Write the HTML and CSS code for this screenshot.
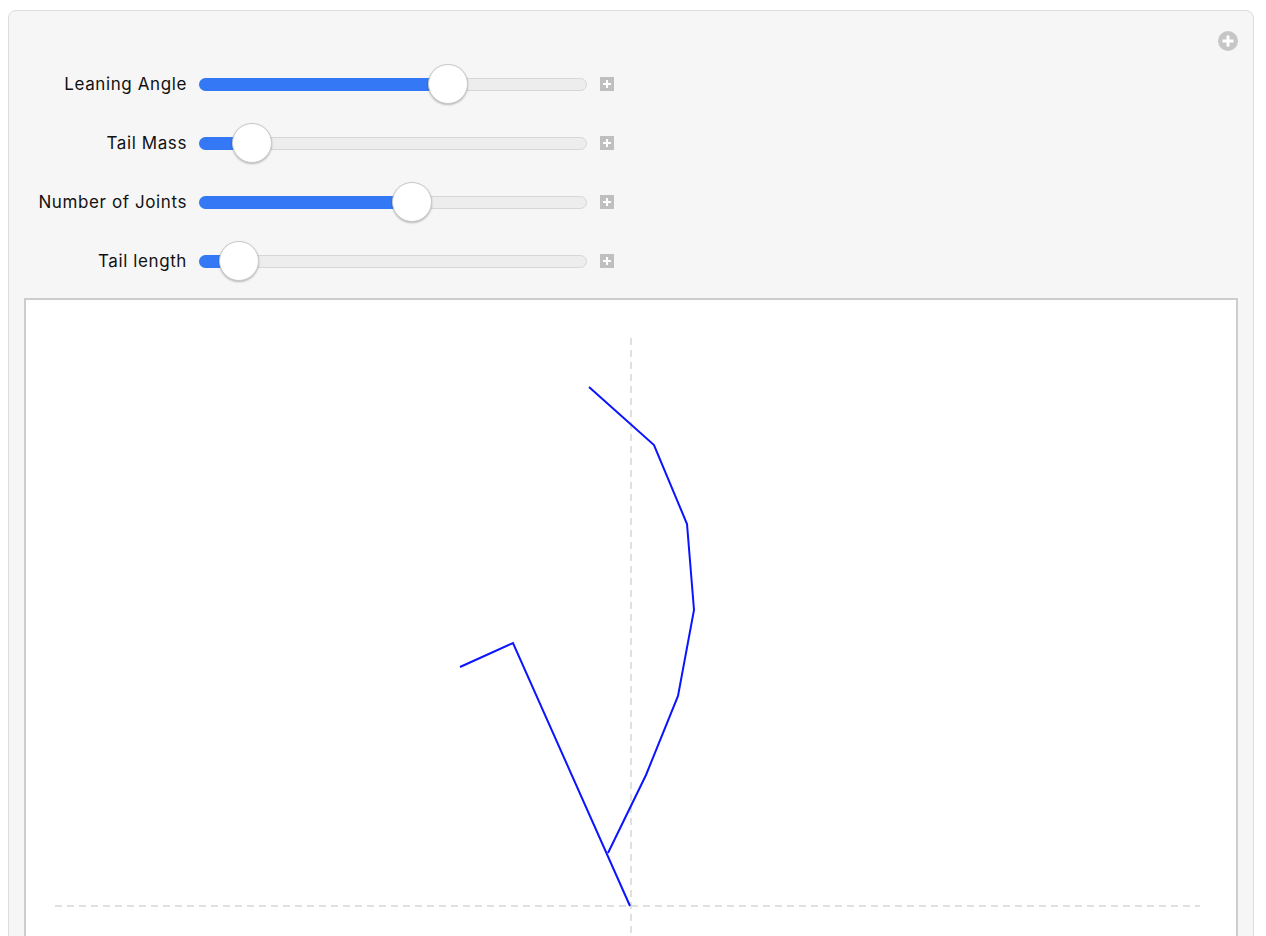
FILE: index.html
```html
<!DOCTYPE html>
<html lang="en">
<head>
<meta charset="utf-8">
<title>Leaning Tail</title>
<link rel="stylesheet" href="styles.css">
</head>
<body>
<div class="panel">
  <button class="panel-add" aria-label="Show options">
    <svg viewBox="0 0 20 20" width="20" height="20">
      <circle cx="10" cy="10" r="10" fill="#c6c6c6"/>
      <rect x="8.5" y="4.5" width="3" height="11" fill="#fff"/>
      <rect x="4.5" y="8.5" width="11" height="3" fill="#fff"/>
    </svg>
  </button>

  <div class="controls">
    <div class="control">
      <span class="label">Leaning Angle</span>
      <div class="slider"><div class="fill" style="width: 248px"></div><div class="thumb" style="left: 248px"></div></div>
      <span class="more"></span>
    </div>
    <div class="control">
      <span class="label">Tail Mass</span>
      <div class="slider"><div class="fill" style="width: 52px"></div><div class="thumb" style="left: 52px"></div></div>
      <span class="more"></span>
    </div>
    <div class="control">
      <span class="label">Number of Joints</span>
      <div class="slider"><div class="fill" style="width: 212px"></div><div class="thumb" style="left: 212px"></div></div>
      <span class="more"></span>
    </div>
    <div class="control">
      <span class="label">Tail length</span>
      <div class="slider"><div class="fill" style="width: 39px"></div><div class="thumb" style="left: 39px"></div></div>
      <span class="more"></span>
    </div>
  </div>

  <div class="plot">
    <svg class="canvas" viewBox="0 0 1210 700" width="1210" height="700">
      <g class="axes">
        <line x1="605" y1="38" x2="605" y2="700"/>
        <line x1="29" y1="606" x2="1174" y2="606"/>
      </g>
      <g class="body">
        <polyline points="563,87 628,145 661,224 668,310 652,396 620,475 582,553"/>
        <polyline points="434,367 487,343 604,606"/>
      </g>
    </svg>
  </div>
</div>
</body>
</html>
```

FILE: styles.css
```css
html, body {
  margin: 0;
  padding: 0;
  background: #fff;
  overflow: hidden;
}

body {
  font-family: Inter, "Liberation Sans", Arial, sans-serif;
  color: #111;
}

.panel {
  position: relative;
  margin: 10px 12px 0 8px;
  height: 1000px;
  box-sizing: border-box;
  padding: 53px 15px 0 15px;
  background: #f6f6f6;
  border: 1px solid #dcdcdc;
  border-radius: 8px;
}

.panel-add {
  position: absolute;
  top: 20px;
  right: 15px;
  width: 20px;
  height: 20px;
  padding: 0;
  border: 0;
  background: none;
  display: block;
}

.panel-add svg {
  display: block;
}

.controls {
  display: flex;
  flex-direction: column;
  gap: 19px;
}

.control {
  display: grid;
  grid-template-columns: 162px 388px 14px;
  column-gap: 13px;
  align-items: center;
  height: 40px;
}

.label {
  text-align: right;
  font-size: 17px;
  letter-spacing: 0.6px;
  white-space: nowrap;
  margin: -1px -1px 0 0;
}

.slider {
  position: relative;
  height: 13px;
  box-sizing: border-box;
  border: 1px solid #d7d7d7;
  border-radius: 7px;
  background: #ededed;
}

.fill {
  position: absolute;
  left: -1px;
  top: -1px;
  bottom: -1px;
  border-radius: 7px 0 0 7px;
  background: #3478f6;
}

.thumb {
  position: absolute;
  top: 50%;
  width: 40px;
  height: 40px;
  box-sizing: border-box;
  margin: -20px 0 0 -20px;
  border-radius: 50%;
  background: #fff;
  border: 1px solid #c9c9c9;
  box-shadow: 0 1px 2px rgba(0, 0, 0, 0.25);
}

.more {
  position: relative;
  width: 14px;
  height: 14px;
  background: #bfbfbf;
}

.more::before,
.more::after {
  content: "";
  position: absolute;
  background: #fff;
}

.more::before {
  left: 6px;
  top: 3px;
  width: 2px;
  height: 8px;
}

.more::after {
  left: 3px;
  top: 6px;
  width: 8px;
  height: 2px;
}

.plot {
  margin-top: 17px;
  height: 700px;
  background: #fff;
  border: 2px solid #cdcdcd;
  overflow: hidden;
}

.canvas {
  display: block;
}

.axes line {
  stroke: #d6d6d6;
  stroke-width: 1.5;
  stroke-dasharray: 7 5;
}

.body polyline {
  fill: none;
  stroke: #0a14ff;
  stroke-width: 2;
  stroke-linejoin: miter;
}
```
